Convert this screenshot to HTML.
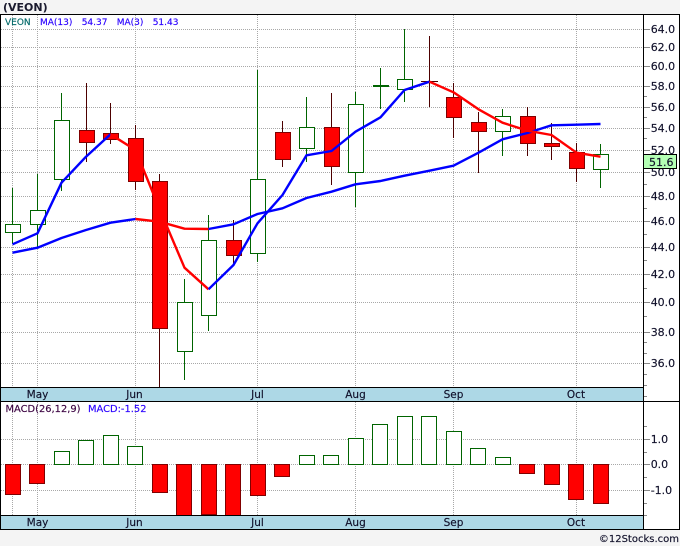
<!DOCTYPE html>
<html><head><meta charset="utf-8"><title>VEON</title>
<style>
html,body{margin:0;padding:0;background:#f4f4f4;width:680px;height:546px;overflow:hidden}
svg{display:block}
text{font-family:"DejaVu Sans","Liberation Sans",sans-serif}
.c{shape-rendering:crispEdges}
.a{font-size:11px;fill:#10102a;stroke:#10102a;stroke-width:.15}
.b{font-size:10.5px;fill:#10102a;stroke:#10102a;stroke-width:.15;text-anchor:middle}
.l{stroke-width:.15}
</style></head><body>
<svg width="680" height="546" viewBox="0 0 680 546" xmlns="http://www.w3.org/2000/svg">
<rect x="0" y="14" width="680" height="516" fill="#fff"/>
<text x="3" y="11" font-size="11" font-weight="bold" fill="#1a1a2e">(VEON)</text>

<!-- bands -->
<g class="c">
<rect x="0" y="388" width="643" height="13" fill="#add8e6"/>
<rect x="0" y="516" width="643" height="14" fill="#add8e6"/>
<!-- grid -->
<path fill="none" stroke="#a8a8a8" stroke-dasharray="1 1" d="M1 29.5H643M1 47.5H643M1 66.5H643M1 86.5H643M1 107.5H643M1 128.5H643M1 150.5H643M1 172.5H643M1 196.5H643M1 221.5H643M1 247.5H643M1 274.5H643M1 302.5H643M1 332.5H643M1 363.5H643M1 439.5H643M1 464.5H643M1 490.5H643"/>
<path fill="none" stroke="#a8a8a8" stroke-dasharray="1 1" d="M12.5 15V387M37.5 15V387M135.5 15V387M257.5 15V387M355.5 15V387M453.5 15V387M576.5 15V387M12.5 402V515M37.5 402V515M135.5 402V515M257.5 402V515M355.5 402V515M453.5 402V515M576.5 402V515"/>
<!-- ticks -->
<path fill="none" stroke="#888" d="M644 29.5H650M644 47.5H650M644 66.5H650M644 86.5H650M644 107.5H650M644 128.5H650M644 150.5H650M644 172.5H650M644 196.5H650M644 221.5H650M644 247.5H650M644 274.5H650M644 302.5H650M644 332.5H650M644 363.5H650M644 96.5H647M644 117.5H647M644 138.5H647M644 184.5H647M644 208.5H647M644 234.5H647M644 260.5H647M644 288.5H647M644 316.5H647M644 342.5H647M644 353.5H647M644 374.5H647M644 385.5H647M644 396.5H647M644 439.5H650M644 464.5H650M644 490.5H650M644 426.5H647M644 452.5H647M644 477.5H647M644 503.5H647M644 515.5H647"/>

<!-- wicks green -->
<path fill="none" stroke="#006400" d="M12.5 188V244M37.5 174V248M61.5 93V191M184.5 279V380M208.5 215V331M257.5 70V262M306.5 97V162M355.5 92V207M380.5 68V109M404.5 29V102M502.5 109V156M600.5 144V188"/>
<!-- wicks red -->
<path fill="none" stroke="#4d0000" d="M86.5 83V162M110.5 103V144M135.5 125V190M159.5 174V387M233.5 220V265M282.5 121V167M331.5 93V185M429.5 36V107M453.5 83V138M478.5 112V173M527.5 107V156M551.5 123V160M576.5 143V182"/>

<!-- green bodies -->
<g fill="#fff" stroke="#006400">
<rect x="5.5" y="224.5" width="15" height="8"/>
<rect x="30.5" y="210.5" width="15" height="14"/>
<rect x="54.5" y="120.5" width="15" height="59"/>
<rect x="177.5" y="302.5" width="15" height="49"/>
<rect x="201.5" y="240.5" width="15" height="75"/>
<rect x="250.5" y="179.5" width="15" height="74"/>
<rect x="299.5" y="127.5" width="15" height="21"/>
<rect x="348.5" y="104.5" width="15" height="68"/>
<rect x="397.5" y="79.5" width="15" height="10"/>
<rect x="495.5" y="116.5" width="15" height="15"/>
<rect x="593.5" y="154.5" width="15" height="15"/>
</g>
<rect x="373" y="85" width="16" height="2" fill="#006400"/>
<path d="M421 81.5H438" stroke="#4d0000" fill="none"/>
<!-- red bodies -->
<g fill="#f00" stroke="#800000">
<rect x="79.5" y="130.5" width="15" height="12"/>
<rect x="103.5" y="133.5" width="15" height="6"/>
<rect x="128.5" y="138.5" width="15" height="43"/>
<rect x="152.5" y="181.5" width="15" height="147"/>
<rect x="226.5" y="240.5" width="15" height="15"/>
<rect x="275.5" y="132.5" width="15" height="27"/>
<rect x="324.5" y="127.5" width="15" height="39"/>
<rect x="446.5" y="97.5" width="15" height="20"/>
<rect x="471.5" y="122.5" width="15" height="9"/>
<rect x="520.5" y="116.5" width="15" height="27"/>
<rect x="544.5" y="143.5" width="15" height="3"/>
<rect x="569.5" y="152.5" width="15" height="16"/>
</g>

<!-- MACD green -->
<g fill="#fff" stroke="#006400">
<rect x="54.5" y="451.5" width="15" height="13"/>
<rect x="78.5" y="440.5" width="15" height="24"/>
<rect x="103.5" y="435.5" width="15" height="29"/>
<rect x="127.5" y="446.5" width="15" height="18"/>
<rect x="299.5" y="455.5" width="15" height="9"/>
<rect x="323.5" y="455.5" width="15" height="9"/>
<rect x="348.5" y="438.5" width="15" height="26"/>
<rect x="372.5" y="424.5" width="15" height="40"/>
<rect x="397.5" y="416.5" width="15" height="48"/>
<rect x="421.5" y="416.5" width="15" height="48"/>
<rect x="446.5" y="431.5" width="15" height="33"/>
<rect x="470.5" y="448.5" width="15" height="16"/>
<rect x="495.5" y="457.5" width="15" height="7"/>
</g>
<!-- MACD red -->
<g fill="#f00" stroke="#800000">
<rect x="5.5" y="464.5" width="15" height="30"/>
<rect x="29.5" y="464.5" width="15" height="19"/>
<rect x="152.5" y="464.5" width="15" height="28"/>
<rect x="176.5" y="464.5" width="15" height="51"/>
<rect x="201.5" y="464.5" width="15" height="50"/>
<rect x="225.5" y="464.5" width="15" height="51"/>
<rect x="250.5" y="464.5" width="15" height="31"/>
<rect x="274.5" y="464.5" width="15" height="12"/>
<rect x="519.5" y="464.5" width="15" height="9"/>
<rect x="544.5" y="464.5" width="15" height="20"/>
<rect x="568.5" y="464.5" width="15" height="35"/>
<rect x="593.5" y="464.5" width="15" height="39"/>
</g>

<!-- frame lines -->
<path fill="none" stroke="#000" d="M0 14.5H680M0 387.5H643M0 401.5H680M0 515.5H643M0 529.5H680M0.5 14V530M643.5 14V530M679.5 14V530"/>
</g>

<!-- MA lines -->
<g fill="none" stroke-width="2.4" stroke-linejoin="round">
<path stroke="#0000ff" d="M12.5 252.7L37.5 247.7L61.5 238L86 230L110.5 222.7L135.5 219"/>
<path stroke="#ff0000" d="M135.5 219L159.5 221.7L184.5 228.7L208.5 229"/>
<path stroke="#0000ff" d="M208.5 229L233.5 224.3L257.5 214L282.5 208.3L306.5 198L331.5 191.7L355.5 184.3L380.5 181L404.5 175.7L429.5 170.7L453.5 165.7L478.5 152.7L502.5 139.3L527.5 133L551.5 125.3L576.5 124.7L600.5 124"/>
<path stroke="#0000ff" d="M12.5 244.3L37.5 233.3L61.5 182.7L86 156.7L110.5 134.3"/>
<path stroke="#ff0000" d="M110.5 134.3L135.5 150L159.5 209L184.5 267.7L208.5 289.3"/>
<path stroke="#0000ff" d="M208.5 289.3L233.5 265L257.5 223.3L282.5 195L306.5 155.3L331.5 151L355.5 131.7L380.5 117.3L404.5 90L429.5 81.7"/>
<path stroke="#ff0000" d="M429.5 81.7L453.5 92.3L478.5 109.3L502.5 122.7L527.5 130.7L551.5 135L576.5 152.7L600.5 156.7"/>
</g>

<!-- legend -->
<text class="l" x="5" y="25" font-size="9" fill="#006868" stroke="#006868">VEON</text>
<g font-size="9" fill="#2a00ff" stroke="#2a00ff" class="l">
<text x="40" y="25">MA(13)</text>
<text x="81.7" y="25">54.37</text>
<text x="116.7" y="25">MA(3)</text>
<text x="152.7" y="25">51.43</text>
</g>

<!-- axis labels -->
<text class="a" x="650.7" y="33">64.0</text>
<text class="a" x="650.7" y="51">62.0</text>
<text class="a" x="650.7" y="70">60.0</text>
<text class="a" x="650.7" y="90">58.0</text>
<text class="a" x="650.7" y="111">56.0</text>
<text class="a" x="650.7" y="132">54.0</text>
<text class="a" x="650.7" y="154">52.0</text>
<text class="a" x="650.7" y="176">50.0</text>
<text class="a" x="650.7" y="200">48.0</text>
<text class="a" x="650.7" y="225">46.0</text>
<text class="a" x="650.7" y="251">44.0</text>
<text class="a" x="650.7" y="278">42.0</text>
<text class="a" x="650.7" y="306">40.0</text>
<text class="a" x="650.7" y="336">38.0</text>
<text class="a" x="650.7" y="367">36.0</text>
<text class="a" x="650.7" y="443">1.0</text>
<text class="a" x="650.7" y="468">0.0</text>
<text class="a" x="650.7" y="494">-1.0</text>

<rect class="c" x="643.5" y="154.5" width="33" height="14" fill="#b4ffb4" stroke="#000"/>
<text class="a" x="649" y="166">51.6</text>

<!-- date labels -->
<text class="b" x="37.5" y="398">May</text>
<text class="b" x="134.5" y="398">Jun</text>
<text class="b" x="257.5" y="398">Jul</text>
<text class="b" x="355.5" y="398">Aug</text>
<text class="b" x="453.5" y="398">Sep</text>
<text class="b" x="576" y="398">Oct</text>
<text class="b" x="37.5" y="526">May</text>
<text class="b" x="134.5" y="526">Jun</text>
<text class="b" x="257.5" y="526">Jul</text>
<text class="b" x="355.5" y="526">Aug</text>
<text class="b" x="453.5" y="526">Sep</text>
<text class="b" x="576" y="526">Oct</text>

<text class="l" x="5.5" y="412" font-size="9.9" fill="#3a0040" stroke="#3a0040">MACD(26,12,9)</text>
<text class="l" x="88" y="412" font-size="9.9" fill="#2a00ff" stroke="#2a00ff">MACD:-1.52</text>
<text class="l" x="679" y="542" font-size="10" text-anchor="end" fill="#10102a" stroke="#10102a">©12Stocks.com</text>
</svg>
</body></html>
